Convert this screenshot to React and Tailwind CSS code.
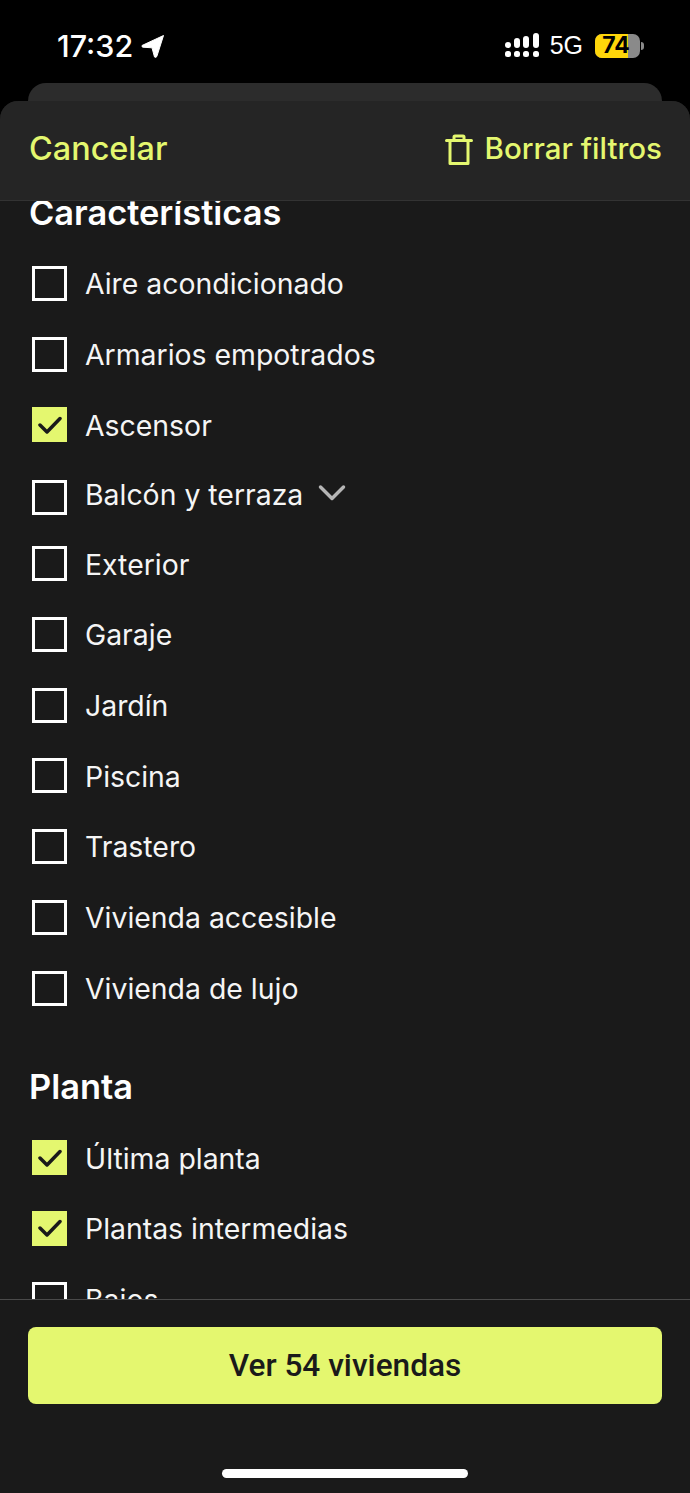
import React from "react";

function Box({ checked, offset }) {
  if (checked) {
    return (
      <span className="flex h-[35px] w-[35px] shrink-0 items-center justify-center bg-[#e4f76f]">
        <svg width="24" height="20" viewBox="0 0 24 20" fill="none" stroke="#1a1a1a" strokeWidth="3.5" strokeLinecap="round" strokeLinejoin="round">
          <path d="M2 10 L9 17 L22 3.5" />
        </svg>
      </span>
    );
  }
  return <span className={`block h-[35px] w-[35px] shrink-0 border-[3.5px] border-white ${offset ? "mt-[6px]" : ""}`} />;
}

function Row({ label, checked, chevron, h = "h-[70.7px]" }) {
  return (
    <div className={`flex items-center pl-[32px] ${h}`}>
      <Box checked={checked} offset={chevron} />
      <span className="ml-[18px] mt-[2px] text-[28.4px] leading-none text-[#f5f5f5]">{label}</span>
      {chevron && (
        <svg className="ml-[15px] -mt-[2px]" width="28" height="18" viewBox="0 0 28 18" fill="none" stroke="#b5b5b5" strokeWidth="3.5" strokeLinecap="round" strokeLinejoin="round">
          <path d="M2.5 3 L14 14.5 L25.5 3" />
        </svg>
      )}
    </div>
  );
}

export default function App() {
  return (
    <div className="relative flex h-[1493px] w-[690px] flex-col overflow-hidden bg-black font-['Inter',sans-serif]">
      <div className="flex h-[83px] shrink-0 items-start justify-between">
        <div className="ml-[57px] mt-[29px] flex items-center">
          <span className="text-[30.5px] font-medium leading-[34px] text-white">17:32</span>
          <svg className="ml-[8px]" width="24" height="24" viewBox="0 0 24 24" fill="white">
            <path d="M22.5 1.5 L1 11.5 Q0.5 13 2 13.2 L11 13.8 L13.5 23 Q15 24 15.8 22.5 Z" stroke="white" strokeLinejoin="round" />
          </svg>
        </div>
        <div className="mr-[46px] mt-[33px] flex items-center">
          <svg width="36" height="25" viewBox="0 0 36 25" fill="white">
            <rect x="0" y="9" width="6" height="6" rx="3" />
            <rect x="0" y="18" width="6" height="6" rx="2.5" />
            <rect x="9" y="5" width="6" height="10" rx="3" />
            <rect x="9" y="18" width="6" height="6" rx="2.5" />
            <rect x="18" y="3" width="6" height="12" rx="3" />
            <rect x="18" y="18" width="6" height="6" rx="2.5" />
            <rect x="28" y="0" width="6" height="15" rx="3" />
            <rect x="28" y="18" width="6" height="6" rx="2.5" />
          </svg>
          <span className="ml-[9px] font-['Liberation_Sans',sans-serif] text-[25px] leading-none text-white">5G</span>
          <div className="relative ml-[12px] flex h-[24px] w-[45px] items-center justify-center overflow-hidden rounded-[7px] bg-[#8a8a8a]">
            <div className="absolute inset-y-0 left-0 w-[33px] bg-[#ffd60a]" />
            <span className="relative -ml-[3px] text-[23px] font-bold leading-none text-black">74</span>
          </div>
          <span className="ml-[1px] h-[8px] w-[3px] rounded-r-full bg-[#8a8a8a]" />
        </div>
      </div>

      <div className="mx-[28px] h-[18px] shrink-0 rounded-t-[18px] bg-[#2c2c2c]" />

      <div className="flex min-h-0 flex-1 flex-col overflow-hidden rounded-t-[18px] bg-[#1a1a1a]">
        <header className="flex h-[100px] shrink-0 items-center justify-between border-b border-[#333333] bg-[#252525] pl-[29px] pr-[28px]">
          <span className="-mt-[3px] text-[32.4px] font-medium leading-none text-[#e4f76f]">Cancelar</span>
          <div className="flex items-center">
            <svg className="-mt-[2px]" width="28" height="32" viewBox="0 0 28 32" fill="none" stroke="#e4f76f" strokeWidth="3" strokeLinejoin="round" strokeLinecap="round">
              <path d="M1.5 6.5 H26.5" />
              <path d="M5 6.5 V29.5 H23 V6.5" />
              <path d="M9 6 V3 Q9 2 10 2 H18 Q19 2 19 3 V6" />
            </svg>
            <span className="ml-[12px] -mt-[3px] text-[29.5px] font-medium leading-none text-[#e4f76f]">Borrar filtros</span>
          </div>
        </header>

        <main className="min-h-0 flex-1 overflow-hidden">
          <h2 className="-mt-[4px] mb-[19px] pl-[29px] text-[34.4px] font-semibold leading-[32px] text-white">Características</h2>
          <Row label="Aire acondicionado" />
          <Row label="Armarios empotrados" />
          <Row label="Ascensor" checked />
          <Row label="Balcón y terraza" chevron h="h-[68.5px]" />
          <Row label="Exterior" />
          <Row label="Garaje" />
          <Row label="Jardín" />
          <Row label="Piscina" />
          <Row label="Trastero" />
          <Row label="Vivienda accesible" />
          <Row label="Vivienda de lujo" />
          <h2 className="mb-[19px] mt-[48px] pl-[29px] text-[34.4px] font-semibold leading-[32px] text-white">Planta</h2>
          <Row label="Última planta" checked />
          <Row label="Plantas intermedias" checked />
          <Row label="Bajos" />
        </main>

        <footer className="h-[194px] shrink-0 border-t border-[#4a4a4a] px-[28px] pt-[27px]">
          <button className="flex h-[77px] w-full items-center justify-center rounded-[8px] bg-[#e4f76f] font-['Roboto',sans-serif] text-[31.6px] font-medium text-[#1a1a1a]">
            Ver 54 viviendas
          </button>
          <div className="mx-auto mt-[65px] h-[9px] w-[246px] rounded-full bg-white" />
        </footer>
      </div>
    </div>
  );
}
